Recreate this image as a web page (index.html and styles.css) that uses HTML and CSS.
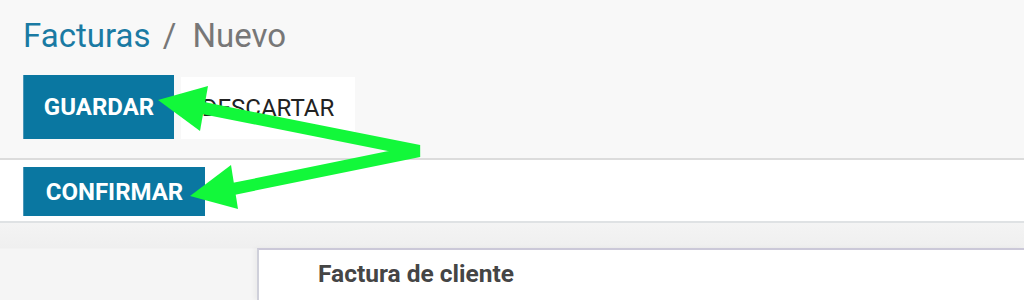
FILE: index.html
```html
<!DOCTYPE html>
<html lang="es">
<head>
<meta charset="utf-8">
<title>Facturas / Nuevo</title>
<link rel="stylesheet" href="styles.css">
</head>
<body>
<div class="page">
  <header class="control-panel">
    <div class="breadcrumb">
      <a class="crumb-link">Facturas</a>
      <span class="crumb-sep">/</span>
      <span class="crumb-current">Nuevo</span>
    </div>
    <div class="actions">
      <button class="btn btn-primary btn-save">GUARDAR</button>
      <button class="btn btn-secondary">DESCARTAR</button>
    </div>
  </header>
  <div class="statusbar">
    <button class="btn btn-primary btn-confirm">CONFIRMAR</button>
  </div>
  <main class="sheet-bg">
    <section class="sheet">
      <h2 class="sheet-title">Factura de cliente</h2>
    </section>
  </main>
  <svg class="annotation" width="1024" height="300" viewBox="0 0 1024 300" aria-hidden="true">
    <polyline points="198,107 419,151 228,190" fill="none" stroke="#12f83a" stroke-width="12" stroke-linejoin="bevel"/>
    <polygon points="158,100 208,86 200,131" fill="#12f83a"/>
    <polygon points="190,196 231,165 238,209" fill="#12f83a"/>
  </svg>
</div>
</body>
</html>
```
FILE: styles.css
```css
* { box-sizing: border-box; }
html, body { margin: 0; padding: 0; }
body {
  font-family: Roboto, "Liberation Sans", Arial, sans-serif;
  background: #ffffff;
  width: 1024px;
  height: 300px;
  overflow: hidden;
}
.page { position: relative; width: 1024px; height: 300px; }

.control-panel {
  background: #f8f8f8;
  padding: 16px 0 19px 23px;
  border-bottom: 2px solid #dcdcdc;
}
.breadcrumb {
  font-size: 33px;
  line-height: 40px;
  height: 40px;
  white-space: nowrap;
}
.crumb-link { color: #1a7aa3; }
.crumb-sep { color: #777777; margin: 0 8px 0 4px; }
.crumb-current { color: #777777; }

.actions {
  margin-top: 19px;
  display: flex;
  align-items: flex-end;
  gap: 7px;
}
.btn {
  font-family: Roboto, "Liberation Sans", Arial, sans-serif;
  border: none;
  padding: 0;
  margin: 0;
  font-size: 24px;
  line-height: 1;
  text-align: center;
  cursor: pointer;
}
.btn-primary {
  background: #0a77a1;
  color: #ffffff;
  font-weight: 700;
  border-left: 1px solid #4b97b8;
}
.btn-save { width: 151px; height: 64px; }
.btn-secondary {
  background: #ffffff;
  color: #222222;
  width: 174px;
  height: 62px;
  font-weight: 400;
}

.statusbar {
  background: #ffffff;
  height: 63px;
  padding: 7px 0 0 23px;
  border-bottom: 2px solid #dfe2e4;
}
.btn-confirm { width: 182px; height: 49px; }

.sheet-bg {
  background: linear-gradient(#f4f4f4, #efefef 25px, #f5f5f5 26px);
  padding: 25px 0 0 257px;
  height: 77px;
}
.sheet {
  background: #ffffff;
  border-top: 2px solid #cbc8d8;
  border-left: 2px solid #cfd0da;
  box-shadow: -3px 0 4px rgba(0,0,0,0.04);
  height: 100%;
  padding: 9px 0 0 59px;
}
.sheet-title {
  margin: 0;
  font-size: 24.5px;
  font-weight: 700;
  color: #454545;
  line-height: 30px;
}

.annotation {
  position: absolute;
  left: 0;
  top: 0;
  pointer-events: none;
}
```
